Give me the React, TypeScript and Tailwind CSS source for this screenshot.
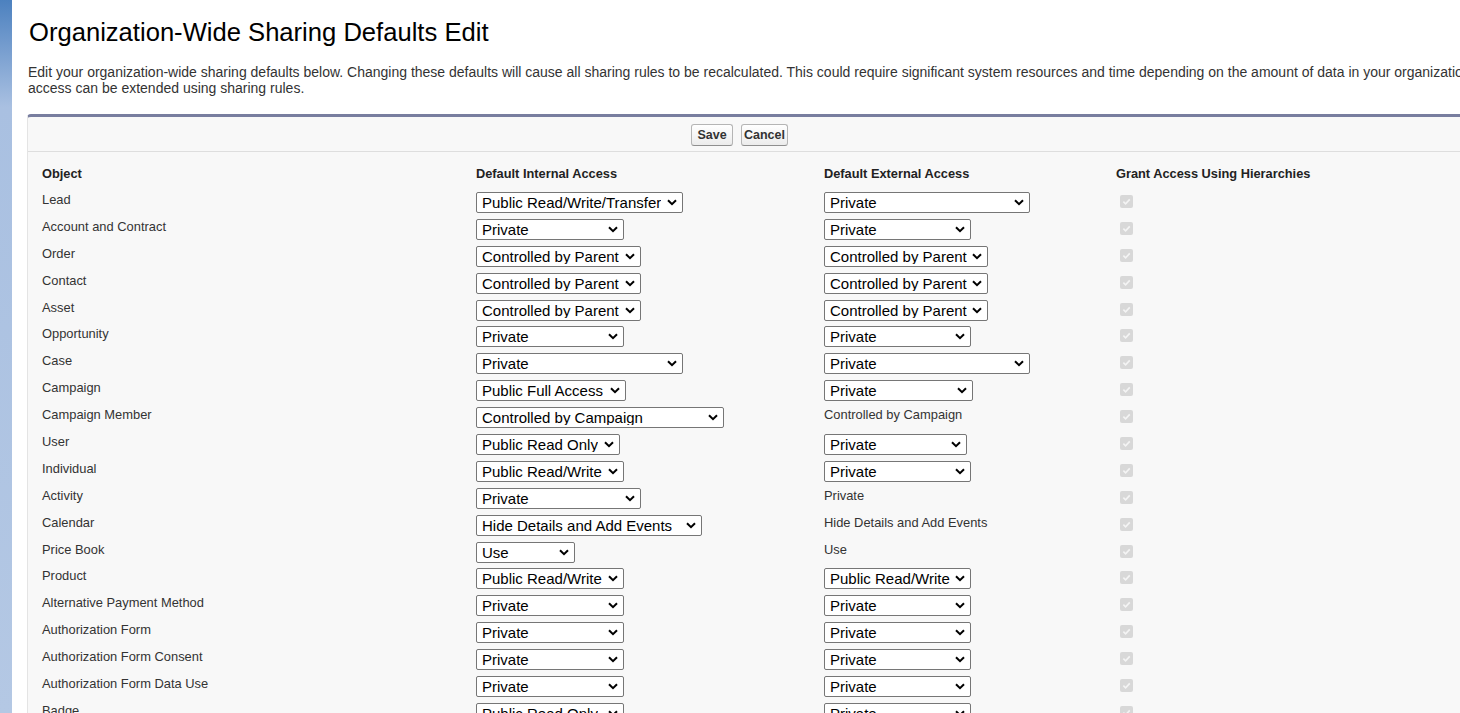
import React from "react";

type Row = {
  label: string;
  internal: { text: string; w: string };
  external: { text: string; w: string } | string;
};

const rows: Row[] = [
  { label: "Lead", internal: { text: "Public Read/Write/Transfer", w: "w-[207px]" }, external: { text: "Private", w: "w-[206px]" } },
  { label: "Account and Contract", internal: { text: "Private", w: "w-[148px]" }, external: { text: "Private", w: "w-[147px]" } },
  { label: "Order", internal: { text: "Controlled by Parent", w: "w-[165px]" }, external: { text: "Controlled by Parent", w: "w-[164px]" } },
  { label: "Contact", internal: { text: "Controlled by Parent", w: "w-[165px]" }, external: { text: "Controlled by Parent", w: "w-[164px]" } },
  { label: "Asset", internal: { text: "Controlled by Parent", w: "w-[165px]" }, external: { text: "Controlled by Parent", w: "w-[164px]" } },
  { label: "Opportunity", internal: { text: "Private", w: "w-[148px]" }, external: { text: "Private", w: "w-[147px]" } },
  { label: "Case", internal: { text: "Private", w: "w-[207px]" }, external: { text: "Private", w: "w-[206px]" } },
  { label: "Campaign", internal: { text: "Public Full Access", w: "w-[150px]" }, external: { text: "Private", w: "w-[149px]" } },
  { label: "Campaign Member", internal: { text: "Controlled by Campaign", w: "w-[248px]" }, external: "Controlled by Campaign" },
  { label: "User", internal: { text: "Public Read Only", w: "w-[144px]" }, external: { text: "Private", w: "w-[143px]" } },
  { label: "Individual", internal: { text: "Public Read/Write", w: "w-[148px]" }, external: { text: "Private", w: "w-[147px]" } },
  { label: "Activity", internal: { text: "Private", w: "w-[165px]" }, external: "Private" },
  { label: "Calendar", internal: { text: "Hide Details and Add Events", w: "w-[226px]" }, external: "Hide Details and Add Events" },
  { label: "Price Book", internal: { text: "Use", w: "w-[99px]" }, external: "Use" },
  { label: "Product", internal: { text: "Public Read/Write", w: "w-[148px]" }, external: { text: "Public Read/Write", w: "w-[147px]" } },
  { label: "Alternative Payment Method", internal: { text: "Private", w: "w-[148px]" }, external: { text: "Private", w: "w-[147px]" } },
  { label: "Authorization Form", internal: { text: "Private", w: "w-[148px]" }, external: { text: "Private", w: "w-[147px]" } },
  { label: "Authorization Form Consent", internal: { text: "Private", w: "w-[148px]" }, external: { text: "Private", w: "w-[147px]" } },
  { label: "Authorization Form Data Use", internal: { text: "Private", w: "w-[148px]" }, external: { text: "Private", w: "w-[147px]" } },
  { label: "Badge", internal: { text: "Public Read Only", w: "w-[148px]" }, external: { text: "Private", w: "w-[147px]" } },
];

function Sel({ text, w }: { text: string; w: string }) {
  return (
    <div
      className={`${w} h-[21px] border border-[#767676] rounded-[2px] bg-white flex items-center justify-between pl-[5px] pr-[5px] text-[15px] text-black leading-none`}
    >
      <span className="whitespace-nowrap overflow-hidden">{text}</span>
      <svg className="shrink-0 ml-[2px]" width="10" height="7" viewBox="0 0 10 7">
        <path d="M1 1.2 L5 5.2 L9 1.2" stroke="#000" strokeWidth="2" fill="none" />
      </svg>
    </div>
  );
}

function Check() {
  return (
    <div className="w-[13px] h-[13px] rounded-[2px] bg-[#d8d8d8] flex items-center justify-center">
      <svg width="9" height="9" viewBox="0 0 10 10">
        <path d="M1.5 5.2 L4 7.6 L8.6 2.6" stroke="#f4f4f4" strokeWidth="1.8" fill="none" />
      </svg>
    </div>
  );
}

function Btn({ children, w }: { children: React.ReactNode; w: string }) {
  return (
    <div
      className={`${w} h-[22px] rounded-[3px] border border-[#b5b5b5] border-b-[#8f8f8f] bg-gradient-to-b from-white to-[#ececec] flex items-center justify-center text-[12.5px] font-bold text-[#333]`}
    >
      {children}
    </div>
  );
}

export default function App() {
  return (
    <div
      className="w-[1460px] h-[713px] overflow-hidden flex bg-white text-[#333]"
      style={{ fontFamily: '"Liberation Sans", Arial, sans-serif' }}
    >
      <div className="w-[12px] shrink-0 bg-gradient-to-b from-[#4c81bf] via-[#a9c0e1] via-15% to-[#b4c8e4]" />
      <div className="flex-1 min-w-0 bg-white rounded-tl-[4px] pl-[15px]">
        <h1 className="pt-[18px] pl-[2px] text-[25.6px] leading-[28px] text-black whitespace-nowrap">
          Organization-Wide Sharing Defaults Edit
        </h1>
        <div className="mt-[18px] pl-[1px] text-[14px] leading-[16px] text-[#333] whitespace-nowrap">
          <div>
            Edit your organization-wide sharing defaults below. Changing these defaults will cause all sharing rules to be recalculated. This could require significant system resources and time depending on the amount of data in your organization. Setting an object to Private makes records visible to record owners and
          </div>
          <div>access can be extended using sharing rules.</div>
        </div>
        <div className="mt-[18px] w-[1480px] border-t-[3px] border-t-[#787e9f] border-l border-l-[#e4e4e4] rounded-tl-[4px] bg-[#f8f8f8]">
          <div className="h-[35px] pt-[2px] flex items-center gap-[8px] pl-[663px] border-b border-b-[#dedede]">
            <Btn w="w-[42px]">Save</Btn>
            <Btn w="w-[47px]">Cancel</Btn>
          </div>
          <div className="flex h-[38px] pt-[14px] text-[12.8px] leading-[16px] font-bold text-[#222]">
            <div className="w-[448px] pl-[14px]">Object</div>
            <div className="w-[348px]">Default Internal Access</div>
            <div className="w-[292px]">Default External Access</div>
            <div className="whitespace-nowrap">Grant Access Using Hierarchies</div>
          </div>
          {rows.map((r) => (
            <div key={r.label} className="flex h-[26.9px]">
              <div className="w-[448px] pl-[14px] pt-[2px] text-[12.9px] leading-[16px] text-[#333] whitespace-nowrap">
                {r.label}
              </div>
              <div className="w-[348px] pt-[2px]">
                <Sel text={r.internal.text} w={r.internal.w} />
              </div>
              <div className="w-[292px] pt-[2px]">
                {typeof r.external === "string" ? (
                  <div className="text-[12.9px] leading-[16px] text-[#333] whitespace-nowrap">
                    {r.external}
                  </div>
                ) : (
                  <Sel text={r.external.text} w={r.external.w} />
                )}
              </div>
              <div className="pt-[5px] pl-[4px]">
                <Check />
              </div>
            </div>
          ))}
        </div>
      </div>
    </div>
  );
}
